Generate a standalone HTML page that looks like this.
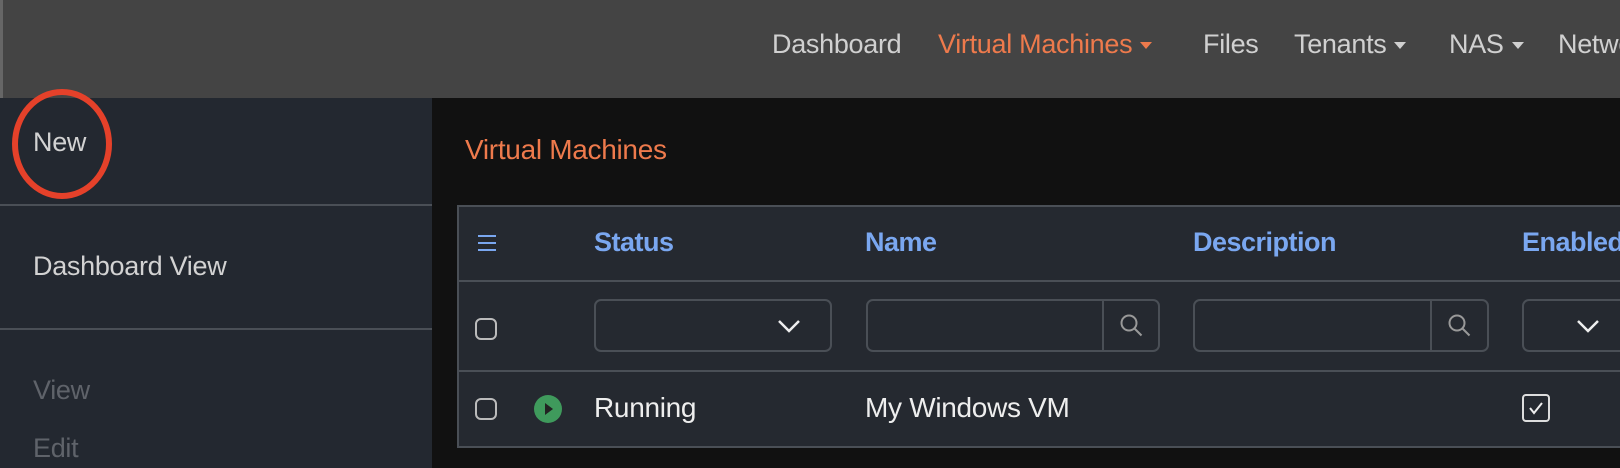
<!DOCTYPE html>
<html><head><meta charset="utf-8"><style>
*{margin:0;padding:0;box-sizing:border-box}
body{width:1620px;height:468px;overflow:hidden;background:#111;font-family:"Liberation Sans",sans-serif;position:relative}
.a{position:absolute;white-space:nowrap}
#hdr{left:0;top:0;width:1620px;height:98px;background:#444;border-left:3px solid #666}
.nav{top:28px;font-size:27px;color:#d0d0d0;line-height:32px;letter-spacing:-0.3px}
.car{display:inline-block;width:0;height:0;border-left:6px solid transparent;border-right:6px solid transparent;border-top:7px solid currentColor;vertical-align:middle;margin-left:8px}
#side{left:0;top:98px;width:432px;height:370px;background:#232830}
.div{left:0;width:432px;height:2px;background:#4a4f56}
.st{font-size:27px;color:#d2d2d2;line-height:32px;letter-spacing:-0.3px}
.tb{left:457px;top:205px;width:1170px;height:243px;background:#252930;border:2px solid #4a4f56}
.hl{left:457px;width:1170px;height:2px;background:#4a4f56}
.th{top:226px;font-size:27px;font-weight:bold;color:#7aa7f0;line-height:32px;letter-spacing:-0.5px}
.cb{width:22px;height:22px;border:2px solid #bbb;border-radius:6px}
.inp{top:299px;height:53px;border:2px solid #4a4f56;border-radius:7px}
.td{font-size:28px;color:#eee;line-height:32px;letter-spacing:-0.3px}
</style></head><body>
<div class="a" id="hdr"></div>
<div class="a nav" style="left:772px">Dashboard</div>
<div class="a nav" style="left:938px;color:#ee7a4c">Virtual Machines<span class="car"></span></div>
<div class="a nav" style="left:1203px">Files</div>
<div class="a nav" style="left:1294px">Tenants<span class="car"></span></div>
<div class="a nav" style="left:1449px">NAS<span class="car"></span></div>
<div class="a nav" style="left:1558px">Network</div>

<div class="a" id="side"></div>
<div class="a div" style="top:204px"></div>
<div class="a div" style="top:328px"></div>
<div class="a st" style="left:33px;top:126px">New</div>
<div class="a" style="left:12px;top:89px;width:100px;height:110px;border:6px solid #e5412a;border-radius:50%"></div>
<div class="a st" style="left:33px;top:250px">Dashboard View</div>
<div class="a st" style="left:33px;top:374px;color:#5f636a">View</div>
<div class="a st" style="left:33px;top:432px;color:#5f636a">Edit</div>

<div class="a" style="left:465px;top:134px;font-size:28px;color:#ee7a4c;letter-spacing:-0.3px">Virtual Machines</div>
<div class="a tb"></div>
<div class="a hl" style="top:280px"></div>
<div class="a hl" style="top:370px"></div>
<svg class="a" style="left:477px;top:234px" width="20" height="18"><path d="M1 2h18M1 9h18M1 16h18" stroke="#7aa7f0" stroke-width="2"/></svg>
<div class="a th" style="left:594px">Status</div>
<div class="a th" style="left:865px">Name</div>
<div class="a th" style="left:1193px">Description</div>
<div class="a th" style="left:1522px">Enabled</div>

<div class="a cb" style="left:475px;top:318px"></div>
<div class="a inp" style="left:594px;width:238px"></div>
<svg class="a" style="left:777px;top:318px" width="24" height="16"><path d="M2 3l10 10 10-10" stroke="#eee" stroke-width="2.5" fill="none"/></svg>
<div class="a inp" style="left:866px;width:294px"></div>
<div class="a" style="left:1102px;top:300px;width:2px;height:51px;background:#4a4f56"></div>
<svg class="a" style="left:1119px;top:313px" width="26" height="26"><circle cx="10" cy="10" r="7.5" stroke="#999" stroke-width="2" fill="none"/><path d="M15.5 15.5l7 7" stroke="#999" stroke-width="2"/></svg>
<div class="a inp" style="left:1193px;width:296px"></div>
<div class="a" style="left:1430px;top:300px;width:2px;height:51px;background:#4a4f56"></div>
<svg class="a" style="left:1447px;top:313px" width="26" height="26"><circle cx="10" cy="10" r="7.5" stroke="#999" stroke-width="2" fill="none"/><path d="M15.5 15.5l7 7" stroke="#999" stroke-width="2"/></svg>
<div class="a inp" style="left:1522px;width:120px"></div>
<svg class="a" style="left:1576px;top:318px" width="24" height="16"><path d="M2 3l10 10 10-10" stroke="#eee" stroke-width="2.5" fill="none"/></svg>

<div class="a cb" style="left:475px;top:398px"></div>
<svg class="a" style="left:534px;top:395px" width="28" height="28"><circle cx="14" cy="14" r="14" fill="#3f9a5c"/><path d="M11 8l8 6-8 6z" fill="#222"/></svg>
<div class="a td" style="left:594px;top:392px">Running</div>
<div class="a td" style="left:865px;top:392px">My Windows VM</div>
<div class="a" style="left:1522px;top:394px;width:28px;height:28px;border:2px solid #ddd;border-radius:4px"></div>
<svg class="a" style="left:1522px;top:394px" width="28" height="28"><path d="M8 14l4 5 8-10" stroke="#eee" stroke-width="2" fill="none"/></svg>
</body></html>
